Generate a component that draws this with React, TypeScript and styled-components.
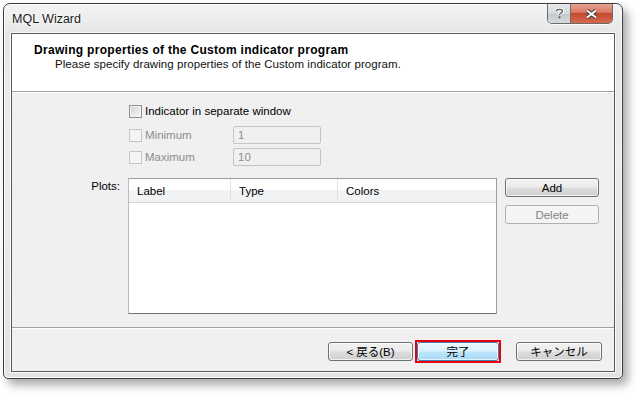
import styled, { createGlobalStyle, css } from "styled-components";

const GlobalStyle = createGlobalStyle`
  html, body {
    margin: 0;
    padding: 0;
    background: #ffffff;
  }
  body {
    font-family: "Liberation Sans", Arial, "Noto Sans CJK JP", sans-serif;
    font-size: 11.5px;
    color: #000;
  }
`;

const Stage = styled.div`
  width: 639px;
  height: 395px;
  padding: 3px 0 0 3px;
  box-sizing: border-box;
`;

const Window = styled.div`
  width: 620px;
  height: 376px;
  box-sizing: border-box;
  border: 1px solid #3c3c3c;
  border-radius: 7px 7px 5px 5px;
  background: linear-gradient(180deg, #f4f4f4 0%, #e6e6e6 8%, #ececec 40%, #e2e2e2 100%);
  box-shadow: 5px 6px 10px rgba(0, 0, 0, 0.34), inset 0 0 0 1px rgba(255, 255, 255, 0.85);
  display: flex;
  flex-direction: column;
`;

const TitleBar = styled.div`
  height: 29px;
  display: flex;
  align-items: flex-start;
  padding: 0 9px 0 8px;
`;

const Title = styled.div`
  font-size: 12.5px;
  color: #1a1a1a;
  margin-top: 8px;
  text-shadow: 0 0 6px rgba(255, 255, 255, 1), 0 0 3px rgba(255, 255, 255, 1);
`;

const CaptionButtons = styled.div`
  margin-left: auto;
  display: flex;
  border: 1px solid #6b6b6b;
  border-top: none;
  border-radius: 0 0 5px 5px;
  overflow: hidden;
  height: 19px;
  box-shadow: 0 1px 0 rgba(255, 255, 255, 0.8);
`;

const CaptionButton = styled.div<{ $close?: boolean }>`
  display: flex;
  align-items: center;
  justify-content: center;
  width: ${({ $close }) => ($close ? "41px" : "22px")};
  background: linear-gradient(180deg, #e6e8ea 0%, #d6d9dc 50%, #c3c7cb 51%, #d6dadd 100%);
  ${({ $close }) =>
    $close &&
    css`
      border-left: 1px solid #6b6b6b;
      background: linear-gradient(180deg, #e8a493 0%, #d77762 45%, #c44a2f 50%, #d46a4e 100%);
    `}
`;

const Client = styled.div`
  flex: 1;
  margin: 0 7px 6px 7px;
  border: 1px solid #555a60;
  background: #f0f0f0;
  display: flex;
  flex-direction: column;
  box-shadow: 0 0 0 1px #fafafa;
`;

const Header = styled.div`
  height: 58px;
  flex-shrink: 0;
  box-sizing: border-box;
  background: #ffffff;
  border-bottom: 1px solid #a0a0a0;
  box-shadow: 0 1px 0 #ffffff;
  padding: 9px 0 0 22px;
`;

const HeaderTitle = styled.div`
  font-weight: bold;
  font-size: 12px;
  letter-spacing: 0.3px;
`;

const HeaderSub = styled.div`
  font-size: 11.5px;
  letter-spacing: 0.05px;
  margin: 1px 0 0 21px;
  color: #111;
`;

const Body = styled.div`
  flex: 1;
  display: grid;
  grid-template-columns: 108px 369px 94px;
  column-gap: 8px;
  grid-template-rows: auto 1fr;
  padding-top: 10px;
  box-sizing: border-box;
`;

const Options = styled.div`
  grid-column: 2;
  display: flex;
  flex-direction: column;
  gap: 4px;
  padding-left: 1px;
`;

const OptionRow = styled.div<{ $first?: boolean }>`
  display: flex;
  align-items: center;
  height: 18px;
  ${({ $first }) => $first && "margin-bottom: 2px;"}
`;

const CheckBox = styled.span<{ $disabled?: boolean }>`
  width: 11px;
  height: 11px;
  border: 1px solid ${({ $disabled }) => ($disabled ? "#c6c6c6" : "#8e8f8f")};
  background: ${({ $disabled }) =>
    $disabled
      ? "#f4f4f4"
      : "linear-gradient(135deg, #cbcbcb 0%, #e3e3e3 45%, #f6f6f6 100%)"};
  box-shadow: inset 0 0 0 1px #f4f4f4;
  margin-right: 3px;
`;

const CheckLabel = styled.span<{ $disabled?: boolean }>`
  color: ${({ $disabled }) => ($disabled ? "#8d8d8d" : "#000")};
  width: ${({ $disabled }) => ($disabled ? "88px" : "auto")};
`;

const TextInput = styled.div`
  width: 88px;
  height: 18px;
  box-sizing: border-box;
  border: 1px solid #c4c4c4;
  border-radius: 2px;
  background: #f0f0f0;
  color: #8d8d8d;
  padding: 1px 0 0 4px;
  line-height: 15px;
`;

const PlotsLabel = styled.div`
  grid-column: 1;
  grid-row: 2;
  text-align: right;
  padding-top: 2px;
  margin-top: 12px;
`;

const ListBox = styled.div`
  grid-column: 2;
  grid-row: 2;
  margin-top: 12px;
  height: 136px;
  box-sizing: border-box;
  border: 1px solid #9a9ea4;
  border-bottom-color: #6e737a;
  border-left-color: #b8bcc2;
  background: #ffffff;
`;

const ListHeader = styled.div`
  display: grid;
  grid-template-columns: 102px 107px 1fr;
  height: 23px;
  background: linear-gradient(180deg, #ffffff 0%, #ffffff 45%, #f2f3f5 50%, #f1f2f4 100%);
  border-bottom: 1px solid #d5d5d5;
`;

const ColumnHead = styled.div<{ $last?: boolean }>`
  display: flex;
  align-items: center;
  padding-left: 8px;
  border-right: ${({ $last }) => ($last ? "none" : "1px solid #e3e4e6")};
`;

const SideButtons = styled.div`
  grid-column: 3;
  grid-row: 2;
  margin-top: 12px;
  display: flex;
  flex-direction: column;
  gap: 8px;
`;

const Button = styled.div<{ $disabled?: boolean; $default?: boolean; $w?: number }>`
  width: ${({ $w }) => ($w ? `${$w}px` : "100%")};
  height: 19px;
  box-sizing: border-box;
  display: flex;
  align-items: center;
  justify-content: center;
  border: 1px solid #707070;
  border-radius: 3px;
  background: linear-gradient(180deg, #f2f2f2 0%, #ebebeb 48%, #dddddd 52%, #cfcfcf 100%);
  box-shadow: inset 0 0 0 1px rgba(255, 255, 255, 0.7);
  font-family: "Liberation Sans", "Noto Sans CJK JP", sans-serif;
  ${({ $disabled }) =>
    $disabled &&
    css`
      border-color: #adb2b5;
      background: #f4f4f4;
      color: #838383;
      box-shadow: none;
    `}
  ${({ $default }) =>
    $default &&
    css`
      border-color: #3c7fb1;
      background: linear-gradient(180deg, #eaf6fd 0%, #d9f0fc 48%, #bee6fd 52%, #a7d9f5 100%);
    `}
`;

const Footer = styled.div`
  height: 44px;
  flex-shrink: 0;
  box-sizing: border-box;
  border-top: 1px solid #a0a0a0;
  box-shadow: inset 0 1px 0 #ffffff;
  display: flex;
  align-items: center;
  justify-content: flex-end;
  padding: 3px 12px 0 0;
`;

const FocusRing = styled.div`
  border: 2px solid #e8000f;
  margin: 0 15px 0 2px;
  display: flex;
`;

export default function App() {
  return (
    <Stage>
      <GlobalStyle />
      <Window>
        <TitleBar>
          <Title>MQL Wizard</Title>
          <CaptionButtons>
            <CaptionButton>
              <svg width="9" height="11" viewBox="0 0 9 11">
                <path
                  d="M1.5 3.2 C1.5 0.8 7.5 0.8 7.5 3.2 C7.5 5 4.5 5 4.5 7"
                  fill="none"
                  stroke="#ffffff"
                  strokeWidth="3"
                />
                <path
                  d="M1.5 3.2 C1.5 0.8 7.5 0.8 7.5 3.2 C7.5 5 4.5 5 4.5 7"
                  fill="none"
                  stroke="#555"
                  strokeWidth="1.2"
                />
                <rect x="3.6" y="8.4" width="1.8" height="1.8" fill="#555" />
              </svg>
            </CaptionButton>
            <CaptionButton $close>
              <svg width="13" height="10" viewBox="0 0 13 10">
                <path d="M2 1.5 L11 8.5 M11 1.5 L2 8.5" stroke="#3a3a3a" strokeWidth="4" />
                <path d="M2 1.5 L11 8.5 M11 1.5 L2 8.5" stroke="#ffffff" strokeWidth="2.2" />
              </svg>
            </CaptionButton>
          </CaptionButtons>
        </TitleBar>
        <Client>
          <Header>
            <HeaderTitle>Drawing properties of the Custom indicator program</HeaderTitle>
            <HeaderSub>Please specify drawing properties of the Custom indicator program.</HeaderSub>
          </Header>
          <Body>
            <Options>
              <OptionRow $first>
                <CheckBox />
                <CheckLabel>Indicator in separate window</CheckLabel>
              </OptionRow>
              <OptionRow>
                <CheckBox $disabled />
                <CheckLabel $disabled>Minimum</CheckLabel>
                <TextInput>1</TextInput>
              </OptionRow>
              <OptionRow>
                <CheckBox $disabled />
                <CheckLabel $disabled>Maximum</CheckLabel>
                <TextInput>10</TextInput>
              </OptionRow>
            </Options>
            <PlotsLabel>Plots:</PlotsLabel>
            <ListBox>
              <ListHeader>
                <ColumnHead>Label</ColumnHead>
                <ColumnHead>Type</ColumnHead>
                <ColumnHead $last>Colors</ColumnHead>
              </ListHeader>
            </ListBox>
            <SideButtons>
              <Button>Add</Button>
              <Button $disabled>Delete</Button>
            </SideButtons>
          </Body>
          <Footer>
            <Button $w={85}>&lt; 戻る(B)</Button>
            <FocusRing>
              <Button $default $w={82}>完了</Button>
            </FocusRing>
            <Button $w={86}>キャンセル</Button>
          </Footer>
        </Client>
      </Window>
    </Stage>
  );
}
